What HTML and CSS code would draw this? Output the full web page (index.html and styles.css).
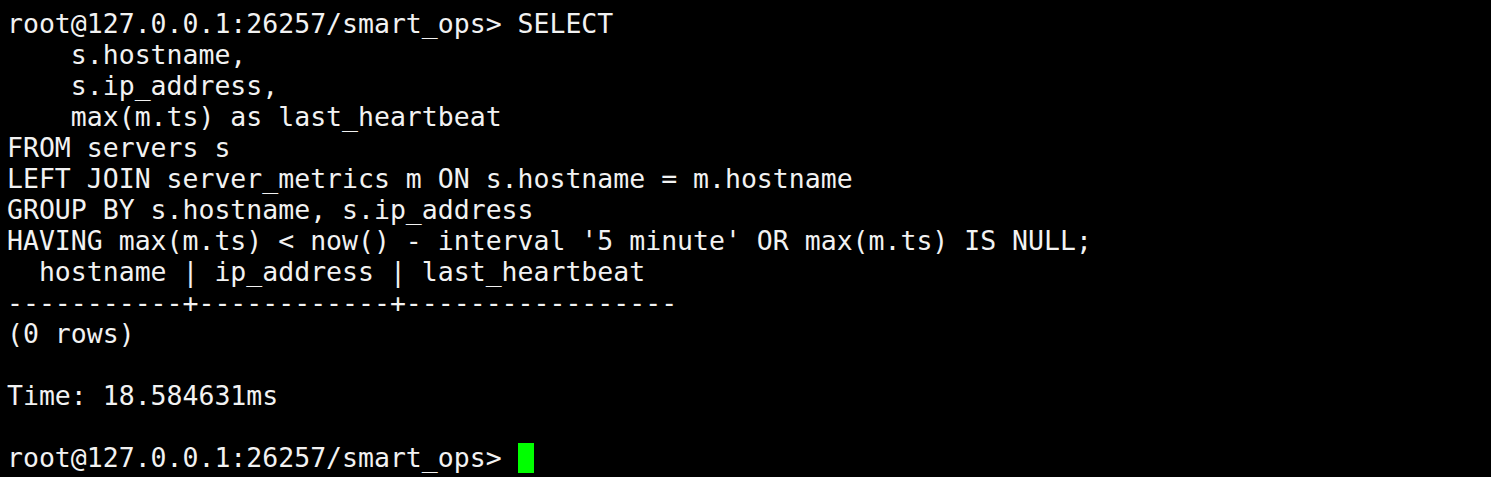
FILE: index.html
```html
<!DOCTYPE html>
<html>
<head>
<meta charset="utf-8">
<link rel="stylesheet" href="styles.css">
</head>
<body>
<pre class="term">root@127.0.0.1:26257/smart_ops&gt; SELECT
    s.hostname,
    s.ip_address,
    max(m.ts) as last_heartbeat
FROM servers s
LEFT JOIN server_metrics m ON s.hostname = m.hostname
GROUP BY s.hostname, s.ip_address
HAVING max(m.ts) &lt; now() - interval '5 minute' OR max(m.ts) IS NULL;
  hostname | ip_address | last_heartbeat
-----------+------------+-----------------
(0 rows)

Time: 18.584631ms

root@127.0.0.1:26257/smart_ops&gt; <span class="cursor"> </span></pre>
</body>
</html>
```
FILE: styles.css
```css
html, body {
  margin: 0;
  padding: 0;
  background: #000;
  height: 100%;
  overflow: hidden;
}
.term {
  margin: 0;
  padding: 8px 0 0 7px;
  font-family: "DejaVu Sans Mono", monospace;
  font-size: 26.5px;
  line-height: 31px;
  color: #f2f2f2;
  white-space: pre;
}
.cursor {
  display: inline-block;
  width: 16px;
  height: 30px;
  margin-top: 1px;
  background: #00ff00;
  vertical-align: top;
}
```
